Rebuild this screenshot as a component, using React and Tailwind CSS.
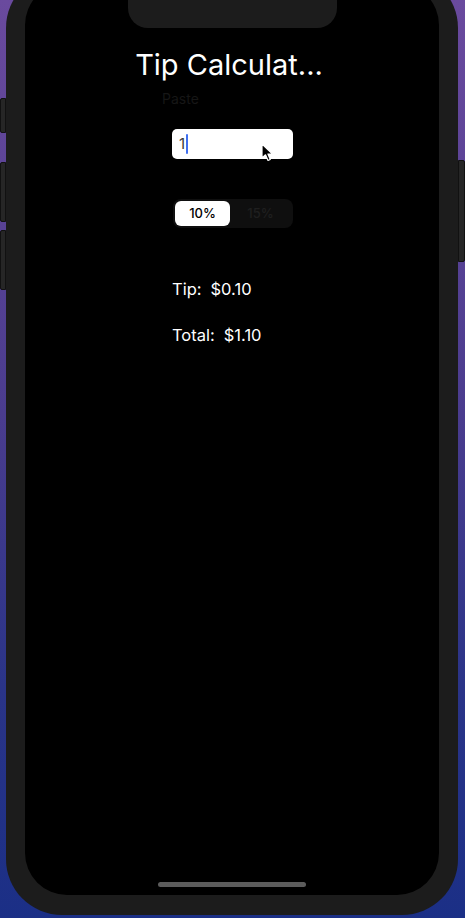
import React, { useState } from "react";

function SideButton({ className }) {
  return <div className={`bg-[#262626] border border-[#111] ${className}`}></div>;
}

function Pointer() {
  // mouse arrow resting on the text field
  return (
    <svg
      className="absolute left-[89px] top-[14px]"
      width="14"
      height="20"
      viewBox="0 0 14 20"
    >
      <path
        d="M1 1 L1 15 L4.5 11.8 L7 17.5 L9.3 16.5 L6.9 11 L11.5 11 Z"
        fill="#000"
        stroke="#fff"
        strokeWidth="1.2"
        strokeLinejoin="round"
      />
    </svg>
  );
}

export default function App() {
  const [amount] = useState("1");
  const [pct, setPct] = useState(10);
  const value = parseFloat(amount) || 0;
  const tip = (value * pct) / 100;

  return (
    <div
      className="w-[465px] h-[918px] overflow-hidden flex bg-[linear-gradient(180deg,#6a4a9e_0%,#4a3c8e_45%,#2a3488_75%,#1b2f86_100%)]"
      style={{ fontFamily: "Inter, 'Noto Sans', sans-serif" }}
    >
      {/* left hardware buttons */}
      <div className="w-[6px] flex flex-col">
        <SideButton className="mt-[98px] h-[35px] rounded-l-[2px]" />
        <SideButton className="mt-[29px] h-[60px] rounded-l-[2px]" />
        <SideButton className="mt-[8px] h-[60px] rounded-l-[2px]" />
      </div>

      {/* phone body */}
      <div className="w-[452px] h-[943px] -mt-[28px] shrink-0 rounded-[56px] bg-[#1c1c1c] px-[19px] pt-[11px] pb-[20px] flex flex-col">
        <div className="flex-1 bg-black rounded-[42px] flex flex-col">
          {/* notch */}
          <div className="w-[209px] h-[45px] mx-auto bg-[#1c1c1c] rounded-b-[20px]"></div>

          <h1 className="mt-[18px] pr-[6px] text-center text-white text-[29px] leading-[37px] font-normal">
            Tip Calculat...
          </h1>

          <div className="pl-[137px] mt-[7px] text-[14px] leading-[18px] text-[#161616]">
            Paste
          </div>

          <div className="relative ml-[147px] mt-[21px] w-[121px] h-[30px] bg-white rounded-[5px] flex items-center pl-[7px]">
            <span className="text-[15px] text-[#3a3a3a]">{amount}</span>
            <span className="ml-[1px] w-[2px] h-[20px] bg-[#3f6ff0] rounded-full"></span>
            <Pointer />
          </div>

          <div className="ml-[148px] mt-[40px] w-[120px] h-[29px] bg-[#0f0f0f] rounded-[8px] p-[2px] flex">
            {[10, 15].map((p) => (
              <button
                key={p}
                onClick={() => setPct(p)}
                className={`${p === 10 ? "w-[55px]" : "flex-1"} rounded-[6px] text-[13px] font-medium ${
                  pct === p ? "bg-white text-black" : "text-[#1f1f1f]"
                }`}
              >
                {p}%
              </button>
            ))}
          </div>

          <div className="ml-[147px] mt-[50px] flex text-white text-[16.5px] leading-[22px]">
            <span className="mr-[9px]">Tip:</span>
            <span>${tip.toFixed(2)}</span>
          </div>
          <div className="ml-[147px] mt-[24px] flex text-white text-[16.5px] leading-[22px]">
            <span className="mr-[9px]">Total:</span>
            <span>${(value + tip).toFixed(2)}</span>
          </div>

          <div className="flex-1"></div>
          <div className="mx-auto mb-[8px] w-[148px] h-[5px] rounded-full bg-[#5c5c5c]"></div>
        </div>
      </div>

      {/* right hardware button */}
      <div className="w-[7px] flex flex-col">
        <SideButton className="mt-[160px] h-[102px] rounded-r-[2px]" />
      </div>
    </div>
  );
}
